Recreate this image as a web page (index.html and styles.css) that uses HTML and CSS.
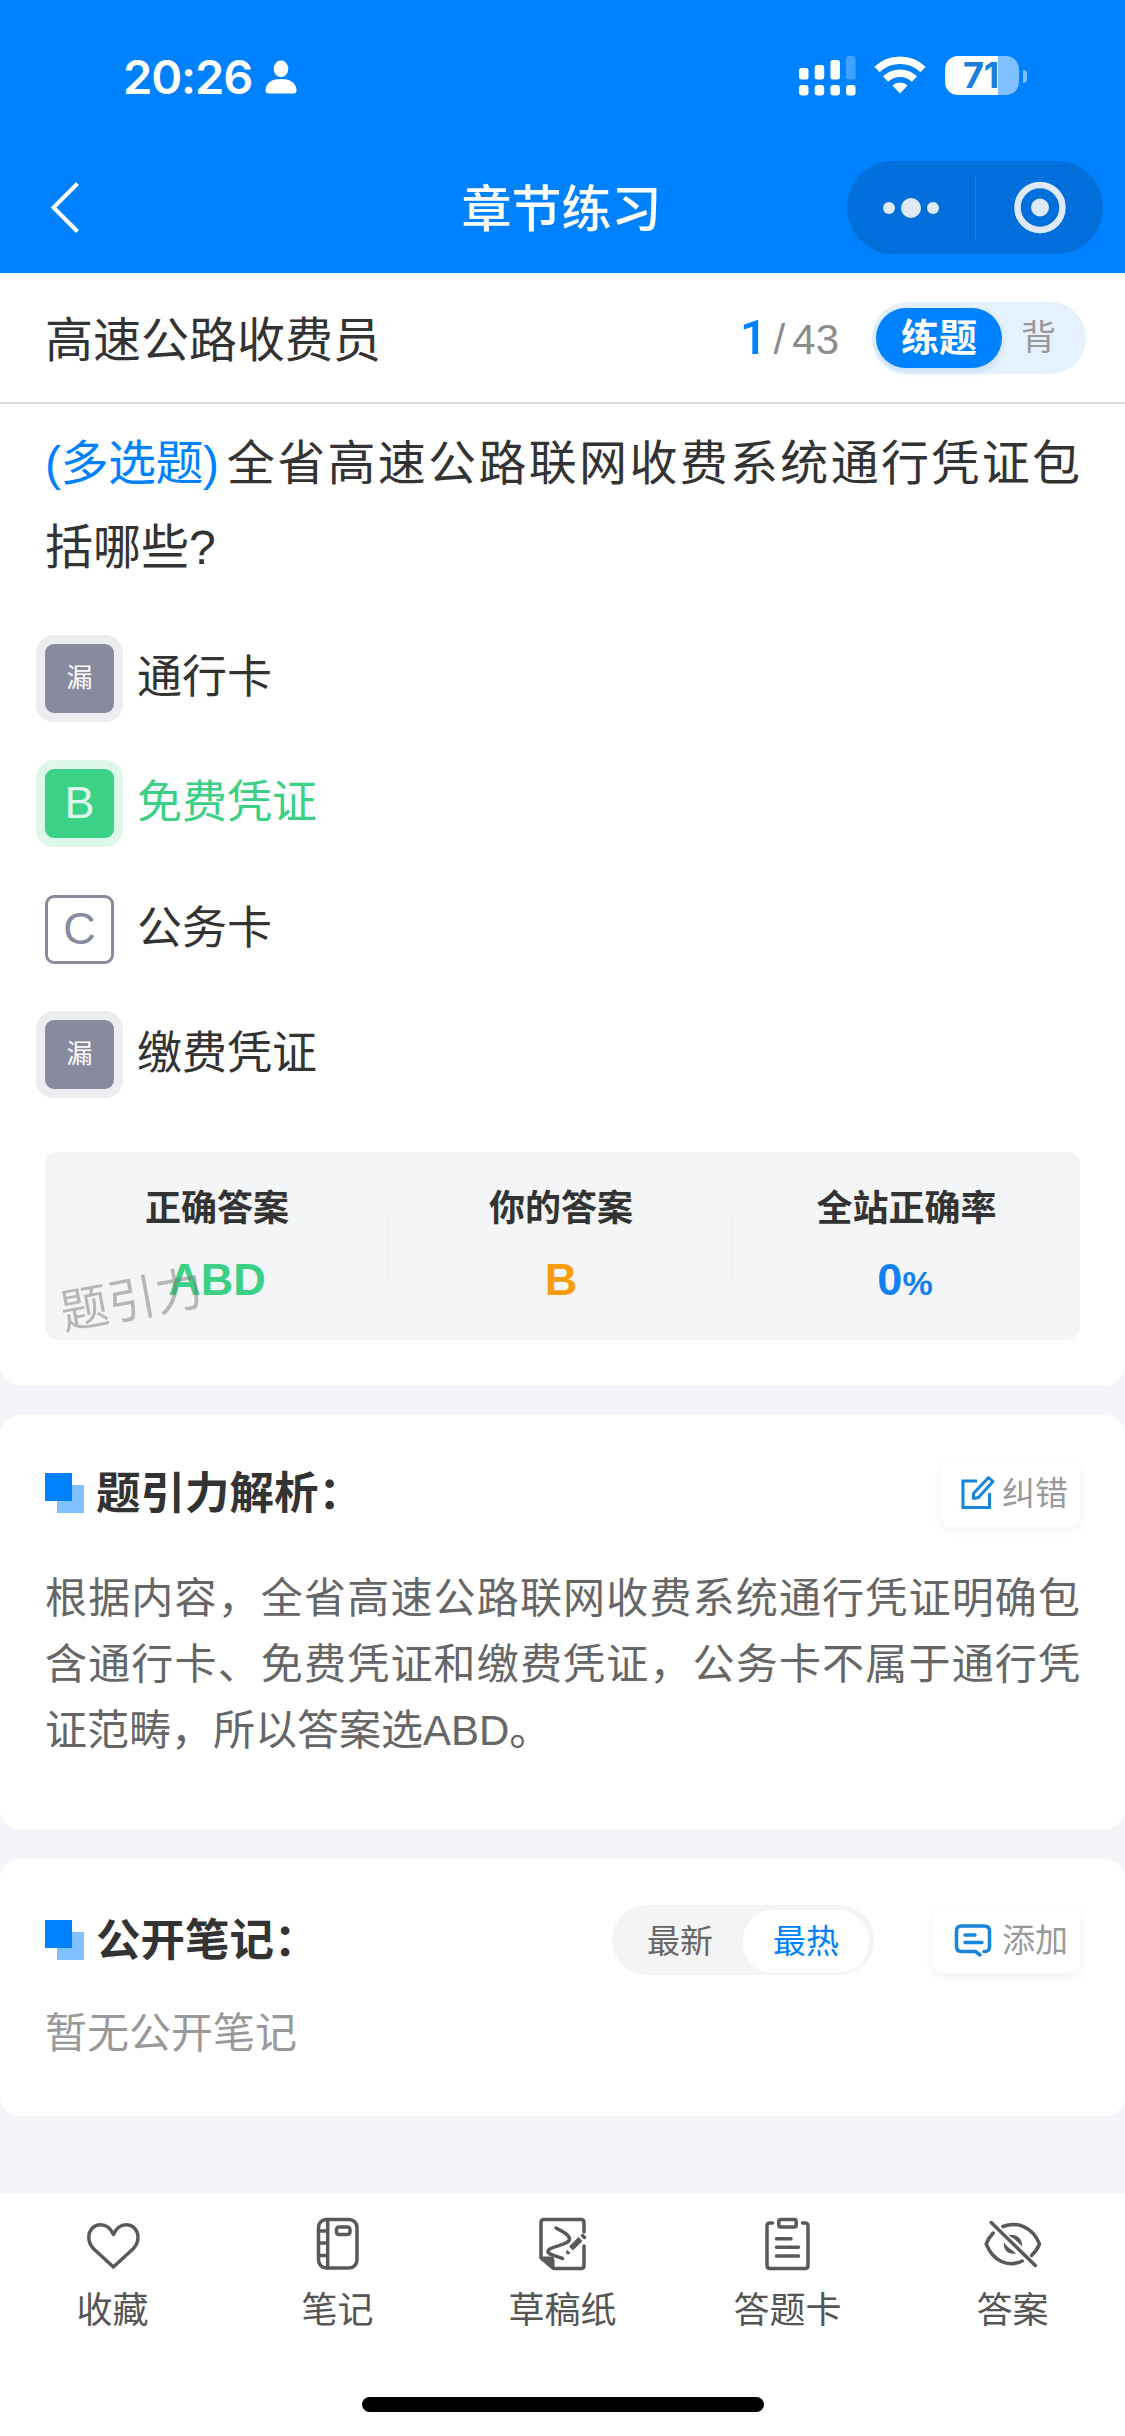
FILE: index.html
```html
<!DOCTYPE html>
<html lang="zh-CN">
<head>
<meta charset="utf-8">
<title>章节练习</title>
<link rel="stylesheet" href="styles.css">
</head>
<body>
<header class="top">
  <div class="status">
    <span class="clock">20:26</span>
    <svg class="person" width="32" height="34" viewBox="0 0 32 34" fill="#fff"><ellipse cx="16" cy="8.800" rx="7.300" ry="8.300"/><path d="M0.500 30C1 22 8 19 16 19s15 3 15.500 11c0 2.500-1 3.500-3 3.500h-25c-2 0-3-1-3-3.500z"/></svg>
    <svg class="signal" width="57" height="40" viewBox="0 0 57 40" fill="#fff"><rect x="0" y="12" width="9.500" height="11.500" rx="2.500"/><rect x="15.700" y="9" width="9.500" height="14.500" rx="2.500"/><rect x="31.400" y="4" width="9.500" height="19.500" rx="2.500"/><rect x="47" y="0" width="9.500" height="23.500" rx="2.500" opacity=".25"/><rect x="0" y="29" width="9.500" height="10.500" rx="3"/><rect x="15.700" y="29" width="9.500" height="10.500" rx="3"/><rect x="31.400" y="29" width="9.500" height="10.500" rx="3"/><rect x="47" y="29" width="9.500" height="10.500" rx="3"/></svg>
    <svg class="wifi" width="52" height="38" viewBox="0 0 52 38"><g fill="none" stroke="#fff" stroke-width="7.500"><path d="M3 13.500A33 33 0 0 1 49 13.500"/><path d="M11.500 23A21 21 0 0 1 40.500 23"/></g><path d="M18.500 29.500a11 11 0 0 1 15 0L26 37.500z" fill="#fff"/></svg>
    <div class="battery"><span class="level">71</span></div><i class="cap"></i>
  </div>
  <div class="nav">
    <svg class="back" width="30" height="52" viewBox="0 0 30 52" fill="none" stroke="#fff" stroke-width="4"><path d="M27.500 2.500 3.500 26.500 27.500 50.500"/></svg>
    <h1>章节练习</h1>
    <div class="capsule">
      <svg width="256" height="93" viewBox="0 0 256 93" fill="#dfeaf8"><circle cx="42" cy="47" r="6"/><circle cx="64" cy="47" r="10"/><circle cx="86" cy="47" r="6"/><path d="M128.500 15v64" stroke="#1a7ce0"/><circle cx="193" cy="46.500" r="22.500" fill="none" stroke="#dfeaf8" stroke-width="6.500"/><circle cx="193" cy="46.500" r="9"/></svg>
    </div>
  </div>
</header>
<div class="bar">
  <span class="course">高速公路收费员</span>
  <span class="count"><b>1</b><i>/</i>43</span>
  <div class="mode"><span class="on">练题</span><span class="off">背</span></div>
</div>
<main>
<section class="card question">
  <p class="stem"><span class="kind">(多选题)</span>全省高速公路联网收费系统通行凭证包括哪些?</p>
  <ul class="options">
    <li><span class="key missed">漏</span><span class="label">通行卡</span></li>
    <li class="right"><span class="key hit">B</span><span class="label">免费凭证</span></li>
    <li><span class="key">C</span><span class="label">公务卡</span></li>
    <li><span class="key missed">漏</span><span class="label">缴费凭证</span></li>
  </ul>
  <div class="result">
    <div><h3>正确答案</h3><b class="green">ABD</b></div>
    <div><h3>你的答案</h3><b class="orange">B</b></div>
    <div><h3>全站正确率</h3><b class="blue">0<small>%</small></b></div>
    <span class="mark">题引力</span>
  </div>
</section>
<section class="card analysis">
  <div class="head"><i class="squares"></i><h2>题引力解析：</h2>
    <span class="btn"><svg width="36" height="36" viewBox="0 0 36 36" fill="none" stroke="#1785dc" stroke-width="3"><path d="M17 6H3v26.500h26.500V18"/><path d="M28.500 2.500l4.500 4L18.500 22.500 13.500 23.500V18.500z" stroke-linejoin="round"/></svg><span>纠错</span></span></div>
  <p class="text">根据内容，全省高速公路联网收费系统通行凭证明确包含通行卡、免费凭证和缴费凭证，公务卡不属于通行凭证范畴，所以答案选ABD。</p>
</section>
<section class="card notes">
  <div class="head"><i class="squares"></i><h2>公开笔记：</h2>
    <div class="sort"><span>最新</span><span class="on">最热</span></div>
    <span class="btn add"><svg width="38" height="34" viewBox="0 0 38 34" fill="none" stroke="#1785dc" stroke-width="3.500" stroke-linejoin="round" stroke-linecap="round"><path d="M30 28.500q5.500.5 5.500-5V8Q35.500 3 30.500 3h-23Q2.500 3 2.500 8V23.500q0 5 5 5H21.500L26 32"/><path d="M11 12h10M11 19.500h17"/></svg><span>添加</span></span></div>
  <p class="empty">暂无公开笔记</p>
</section>
</main>
<footer>
  <nav class="tabs">
    <span><svg viewBox="0 0 60 60"><path d="M30.400 20.500C28 14.500 23 10.700 17.700 10.700 11 10.700 5.800 16 5.800 23.500c0 4.500 1.800 8 4.800 11.300L30.400 53 50.200 34.800c3-3.300 4.800-6.800 4.800-11.300 0-7.500-5.200-12.800-11.900-12.800-5.300 0-10.300 3.800-12.700 9.800z"/></svg>收藏</span>
    <span><svg viewBox="0 0 60 60"><rect x="10.500" y="5.500" width="38.500" height="48.500" rx="8"/><path d="M19.700 5.500V54M10.500 17h9M10.500 29h9M10.500 41.500h9"/><rect x="28.500" y="13" width="13.500" height="7.500" rx="2.500"/></svg>笔记</span>
    <span><svg viewBox="0 0 60 60"><path d="M51 18V8.500Q51 5.500 48 5.500H11q-3 0-3 3V44L20.500 54.500H48q3 0 3-3V32"/><path class="solid" d="M7.500 43H18q3 0 3 3v9z"/><path d="M23 14C30 18 36.500 20.500 36.500 25 36.500 31.500 15 32 15 37.500 15 40.500 23 42 29.500 44.500"/><path d="M38 34.500 47.500 25" stroke-width="5.500" stroke-linecap="butt"/><path d="M49.500 21.500 51.500 23.500"/><path class="solid" d="M33.800 39.500v-3l3 2.500z"/></svg>草稿纸</span>
    <span><svg viewBox="0 0 60 60"><path d="M14.500 9H12q-3 0-3 3V51.500q0 3 3 3H47q3 0 3-3V12q0-3-3-3H44.500"/><rect x="20.800" y="5.500" width="17.400" height="7.500" rx="2"/><path d="M18.500 24.700H33M18.500 33.300H40.500M18.500 42H40.500"/></svg>答题卡</span>
    <span><svg viewBox="0 0 60 60"><path d="M8.200 8.500 52.300 51.500M10.200 19Q5 24.500 3.200 30C10 47 25 54 39.200 47M20 12.500C34 7 50 13 56.500 30Q54 36.500 48.500 41.500"/><path class="solid" d="M25.500 21.500C33 19.500 39.500 24 39.200 32.500L34 27.500q-2-2.500-8.500-6zM21 28.500C20 36 25 41 33 39.500l-4.500-4Q25 34 21 28.500z" stroke="none"/></svg>答案</span>
  </nav>
  <div class="home"></div>
</footer>
</body>
</html>
```
FILE: styles.css
```css
* { box-sizing: border-box; margin: 0; padding: 0; }
body {
  width: 1125px; height: 2436px; overflow: hidden;
  display: flex; flex-direction: column;
  background: #f3f5f8; color: #333;
  font-family: "Liberation Sans", "Noto Sans CJK SC", sans-serif;
}
i { font-style: normal; }
svg { display: block; flex: none; }

.top { height: 273px; background: #0082ff; color: #fff; }
.status { height: 153px; padding: 56px 98px 0 123px; display: flex; align-items: flex-start; }
.clock { width: 142px; padding-top: 1px; font: 600 47px/40px Inter, sans-serif; letter-spacing: -1.1px; white-space: nowrap; }
.person { margin-top: 4px; }
.signal { margin-left: auto; }
.wifi { margin-left: 18px; }
.battery {
  margin-left: 19px; width: 74px; height: 39px; border-radius: 13px;
  background: linear-gradient(90deg, #fff 53px, #80c0ff 53px);
}
.level { display: block; padding-left: 18px; font: 700 36px/39px Inter, sans-serif; color: #1a80dc; letter-spacing: -0.3px; }
.cap { width: 4px; height: 13px; margin: 14px 0 0 4px; border-radius: 0 6px 6px 0; background: #80c0ff; }
.nav { display: grid; grid-template-columns: 300px 1fr 300px; align-items: center; height: 108px; }
.back { margin-left: 50px; }
h1 { padding: 5px 2px 0 0; font-size: 50px; font-weight: 500; line-height: 60px; text-align: center; }
.capsule { justify-self: end; width: 256px; height: 93px; margin-right: 22px; border-radius: 47px; background: #006edb; }

.bar { height: 131px; padding: 0 39px 0 45px; display: flex; align-items: center; background: #fff; border-bottom: 2px solid #dedede; }
.course { padding-bottom: 4px; font-size: 48px; }
.count { margin-left: auto; padding-bottom: 1px; display: flex; align-items: baseline; font-size: 42px; color: #8c8c8c; }
.count b { font: 500 49px Roboto, sans-serif; color: #0082ff; }
.count i { margin: 0 7px 0 6px; }
.mode { margin-left: 33px; width: 214px; height: 72px; padding: 0 4px; display: flex; align-items: center; border-radius: 36px; background: #e5f2fe; }
.mode .on { width: 126px; height: 60px; border-radius: 30px; background: #0082ff; color: #fff; font-weight: 700; font-size: 38px; line-height: 60px; text-align: center; box-shadow: 0 3px 9px rgba(0, 90, 180, .15); }
.mode .off { padding-left: 19px; font-size: 35px; line-height: 60px; color: #999; }

main { flex: 1; display: flex; flex-direction: column; gap: 30px; }
.card { background: #fff; border-radius: 20px; padding: 0 45px; }
.question { height: 981px; border-radius: 0 0 20px 20px; padding-top: 18px; }
.stem { font-size: 48px; line-height: 84px; text-align: justify; }
.kind { display: inline-block; margin-right: 6px; letter-spacing: -0.5px; color: #0082ff; }
.options { list-style: none; padding-top: 54px; display: grid; grid-template-rows: repeat(4, 125.33px); }
.options li { display: flex; align-items: flex-start; gap: 23px; font-size: 45px; line-height: 66px; }
.label { padding-top: 1px; }
.options .right { color: #3bd086; }
.key { width: 69px; height: 69px; border: 3px solid #888ba0; border-radius: 9px; color: #888ba0; line-height: 61px; text-align: center; }
.missed { background: #888ba0; color: #fff; font-size: 26px; line-height: 63px; box-shadow: 0 0 0 9px #ededf1; }
.hit { background: #3bd187; border-color: #3bd187; color: #dcf9eb; box-shadow: 0 0 0 9px #ddf8ea; }
.result { position: relative; margin-top: 7px; height: 188px; border-radius: 12px; background: #f3f5f7; display: grid; grid-template-columns: 344px 344px 1fr; text-align: center; }
.result div { padding-top: 30px; background: linear-gradient(#eceff2, #eceff2) right 62px / 2px 66px no-repeat; }
.result div:nth-child(3) { background: none; }
h3 { font-size: 36px; line-height: 54px; font-weight: 700; }
.result b { display: block; margin-top: 18px; font-size: 45px; line-height: 52px; }
.result small { font-size: 34px; }
.green { color: #3bd086; }
.orange { color: #f99d0b; }
.blue { color: #1280ee; padding-right: 3px; }
.mark { position: absolute; left: 15px; top: 115px; font-size: 48px; line-height: 68px; color: rgba(120, 120, 120, .5); transform: rotate(-10.5deg); }

.analysis { height: 414px; padding-top: 43px; }
.head { display: flex; align-items: center; height: 70px; }
.squares { width: 39px; height: 40px; margin-right: 12px; background: linear-gradient(#0082ff, #0082ff) 0 0 / 27px 28px no-repeat, linear-gradient(#80c0ff, #80c0ff) 100% 100% / 27px 28px no-repeat; }
h2 { padding-top: 2px; font-size: 44.500px; line-height: 66px; font-weight: 700; white-space: nowrap; }
.btn { margin-left: auto; width: 139px; height: 66px; padding: 0 12px 0 19px; display: flex; align-items: center; justify-content: space-between; border-radius: 9px; font-size: 33px; color: #999; background: #fff; box-shadow: 0 4px 12px rgba(0, 0, 0, .05); white-space: nowrap; }
.btn span { padding-bottom: 4px; }
.text { padding-top: 38px; font-size: 42px; line-height: 66px; color: #666; text-align: justify; }
.notes { height: 257px; padding-top: 46px; }
.sort { margin-left: auto; width: 262px; height: 70px; padding: 5px; display: grid; grid-template-columns: 1fr 126px; border-radius: 35px; background: #f4f4f5; font-size: 33px; line-height: 63px; text-align: center; color: #666; }
.sort .on { border-radius: 30px; background: #fff; color: #0082ff; }
.add { width: 147px; margin-left: 59px; padding-left: 21px; }
.empty { padding-top: 26px; font-size: 42px; line-height: 66px; color: #999; }

footer { height: 243px; background: #fff; padding-top: 21px; }
.tabs { display: grid; grid-template-columns: repeat(5, 1fr); color: #555; font-size: 36px; line-height: 54px; }
.tabs > span { display: flex; flex-direction: column; align-items: center; gap: 10px; }
.tabs svg { width: 60px; height: 60px; fill: none; stroke: #595959; stroke-width: 3.500; stroke-linecap: round; stroke-linejoin: round; }
.tabs .solid { fill: #595959; stroke-width: 1; }
.home { width: 402px; height: 15px; margin: 59px auto 0; border-radius: 8px; background: #000; }
```
